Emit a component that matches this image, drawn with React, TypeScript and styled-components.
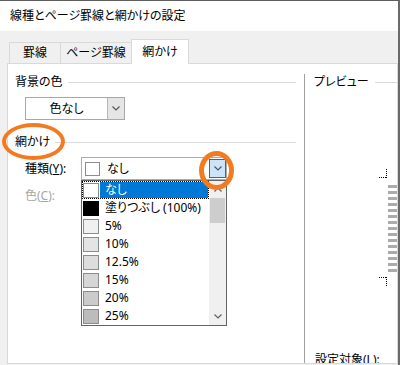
import React from "react";
import styled, { createGlobalStyle } from "styled-components";

const ORANGE = "#f47a1f";

const GlobalStyle = createGlobalStyle`
  html, body { margin: 0; padding: 0; background: #fff; }
  body {
    font-family: "Noto Sans", "Noto Sans CJK JP", sans-serif;
    font-size: 12px;
    color: #000;
    font-feature-settings: "palt";
  }
  * { box-sizing: border-box; }
`;

const Window = styled.div`
  position: relative;
  width: 400px;
  height: 365px;
  display: flex;
  flex-direction: column;
  background: #f0f0f0;
  border-top: 1px solid #5e5e5e;
  border-right: 2px solid #6a6a6a;
  overflow: hidden;
`;

const TitleBar = styled.div`
  flex: none;
  height: 30px;
  background: #fff;
  display: flex;
  align-items: center;
  padding-left: 10px;
  line-height: 14px;
`;

const TabStrip = styled.div`
  flex: none;
  height: 32px;
  display: flex;
  align-items: flex-end;
  padding-left: 9px;
`;

const Tab = styled.div<{ $active?: boolean; $w: number }>`
  position: relative;
  z-index: ${(p) => (p.$active ? 2 : 1)};
  width: ${(p) => p.$w}px;
  height: ${(p) => (p.$active ? 25 : 21)}px;
  margin-bottom: ${(p) => (p.$active ? -1 : 0)}px;
  margin-left: -1px;
  &:first-child { margin-left: 0; }
  border: 1px solid #d9d9d9;
  border-bottom: none;
  background: ${(p) => (p.$active ? "#fff" : "#f0f0f0")};
  display: flex;
  align-items: center;
  justify-content: center;
  line-height: 14px;
`;

const Panel = styled.div`
  flex: 1;
  min-height: 0;
  margin: 0 0 1px 7px;
  background: #fff;
  border: 1px solid #d9d9d9;
  display: flex;
  overflow: hidden;
`;

const LeftCol = styled.div`
  flex: none;
  width: 296px;
  display: flex;
  flex-direction: column;
  padding-top: 11px;
`;

const Separator = styled.div`
  flex: none;
  width: 1px;
  margin-top: 10px;
  background: #a0a0a0;
`;

const RightCol = styled.div`
  flex: 1;
  min-width: 0;
  display: flex;
  flex-direction: column;
  padding-top: 11px;
  overflow: hidden;
`;

const GroupHeader = styled.div<{ $pl: number; $pr: number; $gap: number; $mt?: number }>`
  flex: none;
  display: flex;
  align-items: center;
  height: 14px;
  line-height: 14px;
  padding-left: ${(p) => p.$pl}px;
  padding-right: ${(p) => p.$pr}px;
  margin-top: ${(p) => p.$mt ?? 0}px;
  &::after {
    content: "";
    flex: 1;
    height: 1px;
    margin-left: ${(p) => p.$gap}px;
    background: #dcdcdc;
  }
`;

const ColorSelect = styled.div`
  flex: none;
  margin: 8px 0 0 17px;
  width: 100px;
  height: 23px;
  border: 1px solid #a8a8a8;
  display: flex;
`;

const SelectText = styled.div`
  flex: 1;
  display: flex;
  align-items: center;
  justify-content: center;
  line-height: 14px;
`;

const GrayButton = styled.div`
  flex: none;
  width: 17px;
  background: #e5e5e5;
  border-left: 1px solid #b8b8b8;
  display: flex;
  align-items: center;
  justify-content: center;
`;

const FieldRow = styled.div<{ $mt: number; $h: number }>`
  flex: none;
  display: flex;
  align-items: center;
  margin-top: ${(p) => p.$mt}px;
  height: ${(p) => p.$h}px;
  padding-left: 17px;
`;

const FieldLabel = styled.div<{ $disabled?: boolean }>`
  flex: none;
  width: 56px;
  line-height: 14px;
  color: ${(p) => (p.$disabled ? "#a6a6a6" : "#000")};
`;

const ComboWrap = styled.div`
  position: relative;
  flex: none;
  width: 146px;
  height: 23px;
`;

const Combo = styled.div`
  height: 100%;
  border: 1px solid #adadad;
  background: #fff;
  display: flex;
  align-items: center;
`;

const Swatch = styled.div<{ $c: string; $ml: number; $h?: number }>`
  flex: none;
  width: ${(p) => ($p_h(p))}px;
  height: ${(p) => p.$h ?? 15}px;
  margin-left: ${(p) => p.$ml}px;
  background: ${(p) => p.$c};
  border: 1px solid ${(p) => (p.$c === "#000000" ? "#000" : "#8c8c8c")};
`;
function $p_h(p: { $h?: number }) {
  return p.$h ? 15 : 16;
}

const ComboText = styled.div`
  flex: 1;
  margin-left: 7px;
  line-height: 14px;
`;

const BlueButton = styled.div`
  flex: none;
  align-self: stretch;
  width: 17px;
  margin: 1px 0;
  background: #cce4f7;
  border: 1px solid #0078d7;
  display: flex;
  align-items: center;
  justify-content: center;
`;

const DropList = styled.div`
  position: absolute;
  z-index: 3;
  left: 0;
  top: 100%;
  width: 146px;
  height: 146px;
  border: 1px solid #646464;
  background: #fff;
  display: flex;
`;

const Items = styled.div`
  flex: none;
  width: 127px;
  display: flex;
  flex-direction: column;
`;

const Item = styled.div<{ $sel?: boolean }>`
  flex: none;
  height: 18px;
  display: flex;
  align-items: center;
  padding: 1px 0 1px 0;
  outline: ${(p) => (p.$sel ? "1px dotted #000" : "none")};
  outline-offset: -1px;
`;

const ItemLabel = styled.div<{ $sel?: boolean }>`
  flex: 1;
  align-self: stretch;
  margin: 0 1px 0 1px;
  padding-left: 5px;
  display: flex;
  align-items: center;
  line-height: 14px;
  white-space: nowrap;
  background: ${(p) => (p.$sel ? "#0078d7" : "transparent")};
  color: ${(p) => (p.$sel ? "#fff" : "#000")};
`;

const ScrollBar = styled.div`
  flex: 1;
  background: #f0f0f0;
  display: flex;
  flex-direction: column;
`;

const ScrollArrow = styled.div`
  flex: none;
  height: 17px;
  display: flex;
  align-items: center;
  justify-content: center;
`;

const Track = styled.div`
  flex: 1;
  padding: 0 1px;
`;

const Thumb = styled.div`
  height: 25px;
  background: #cdcdcd;
`;

const PreviewArt = styled.svg`
  flex: none;
  display: block;
  width: 100%;
  height: 261px;
`;

const TargetLabel = styled.div`
  flex: none;
  margin-top: 2px;
  padding-left: 10px;
  line-height: 16px;
  white-space: nowrap;
`;

const Ring = styled.div<{ $l: number; $t: number; $w: number; $h: number; $bw: number }>`
  position: absolute;
  z-index: 10;
  left: ${(p) => p.$l}px;
  top: ${(p) => p.$t}px;
  width: ${(p) => p.$w}px;
  height: ${(p) => p.$h}px;
  border: ${(p) => p.$bw}px solid ${ORANGE};
  border-radius: 50%;
  pointer-events: none;
`;

const Chevron = ({ up, color = "#555" }: { up?: boolean; color?: string }) => (
  <svg width="8" height="5" viewBox="0 0 8 5">
    <polyline
      points={up ? "0.5,4.5 4,1 7.5,4.5" : "0.5,0.5 4,4 7.5,0.5"}
      fill="none"
      stroke={color}
      strokeWidth="1.2"
    />
  </svg>
);

const items: { label: string; c: string }[] = [
  { label: "なし", c: "#ffffff" },
  { label: "塗りつぶし (100%)", c: "#000000" },
  { label: "5%", c: "#f0f0f0" },
  { label: "10%", c: "#e4e4e4" },
  { label: "12.5%", c: "#dddddd" },
  { label: "15%", c: "#d6d6d6" },
  { label: "20%", c: "#cbcbcb" },
  { label: "25%", c: "#bcbcbc" },
];

const stripes = Array.from({ length: 15 }, (_, k) => 96 + k * 6);

export default function App() {
  return (
    <>
      <GlobalStyle />
      <Window>
        <TitleBar>線種とページ罫線と網かけの設定</TitleBar>
        <TabStrip>
          <Tab $w={52}>罫線</Tab>
          <Tab $w={72}>ページ罫線</Tab>
          <Tab $w={58} $active>網かけ</Tab>
        </TabStrip>
        <Panel>
          <LeftCol>
            <GroupHeader $pl={7} $pr={8} $gap={5}>背景の色</GroupHeader>
            <ColorSelect>
              <SelectText>色なし</SelectText>
              <GrayButton>
                <Chevron />
              </GrayButton>
            </ColorSelect>
            <GroupHeader $pl={7} $pr={8} $gap={5} $mt={15}>網かけ</GroupHeader>
            <FieldRow $mt={8} $h={23}>
              <FieldLabel>
                種類(<u>Y</u>):
              </FieldLabel>
              <ComboWrap>
                <Combo>
                  <Swatch $c="#ffffff" $ml={3} $h={14} />
                  <ComboText>なし</ComboText>
                  <BlueButton>
                    <Chevron />
                  </BlueButton>
                </Combo>
                <DropList>
                  <Items>
                    {items.map((it, i) => (
                      <Item key={it.label} $sel={i === 0}>
                        <Swatch $c={it.c} $ml={1} />
                        <ItemLabel $sel={i === 0}>{it.label}</ItemLabel>
                      </Item>
                    ))}
                  </Items>
                  <ScrollBar>
                    <ScrollArrow>
                      <Chevron up color="#606060" />
                    </ScrollArrow>
                    <Track>
                      <Thumb />
                    </Track>
                    <ScrollArrow>
                      <Chevron color="#606060" />
                    </ScrollArrow>
                  </ScrollBar>
                </DropList>
              </ComboWrap>
            </FieldRow>
            <FieldRow $mt={4} $h={24}>
              <FieldLabel $disabled>
                色(<u>C</u>):
              </FieldLabel>
            </FieldRow>
          </LeftCol>
          <Separator />
          <RightCol>
            <GroupHeader $pl={9} $pr={0} $gap={6}>プレビュー</GroupHeader>
            <PreviewArt viewBox="0 0 92 261" preserveAspectRatio="xMinYMin" shapeRendering="crispEdges">
              <line x1="81.5" y1="80" x2="81.5" y2="89" stroke="#000" strokeDasharray="1 1" />
              <line x1="74" y1="88.5" x2="82" y2="88.5" stroke="#000" strokeDasharray="1 1" />
              {stripes.map((y) => (
                <rect key={y} x="83" y={y} width="12" height="3" fill="#ababab" />
              ))}
              <line x1="74" y1="188.5" x2="82" y2="188.5" stroke="#000" strokeDasharray="1 1" />
              <line x1="81.5" y1="188" x2="81.5" y2="197" stroke="#000" strokeDasharray="1 1" />
            </PreviewArt>
            <TargetLabel>
              設定対象(<u>L</u>):
            </TargetLabel>
          </RightCol>
        </Panel>
        <Ring $l={2} $t={122} $w={63} $h={37} $bw={4} />
        <Ring $l={199} $t={150} $w={35} $h={39} $bw={5} />
      </Window>
    </>
  );
}
